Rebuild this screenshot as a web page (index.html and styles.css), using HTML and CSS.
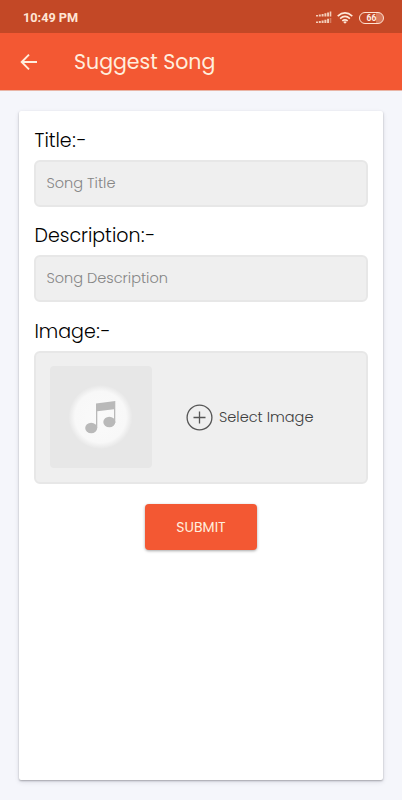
FILE: index.html
```html
<!DOCTYPE html>
<html lang="en">
<head>
<meta charset="utf-8">
<title>Suggest Song</title>
<link rel="stylesheet" href="styles.css">
</head>
<body>
<div class="status">
  <span class="time">10:49 PM</span>
  <svg class="signal" width="16" height="13" viewBox="0 0 16 13" fill="#f3cdb9">
    <path d="M0 4h2v1.500H0zM2.800 3.500h2v2h-2zM5.600 2.900h2v2.600h-2zM8.400 2.200h2v3.300h-2zM11.100 1.400h1.900v4.100h-1.900zM13.700.500h1.600v5h-1.600zM0 10.500h2V12H0zM2.800 10h2v2h-2zM5.600 9.400h2V12h-2zM8.400 8.700h2V12h-2zM11.100 7.800h1.900V12h-1.900z"/>
    <path d="M13.700 7h1.600v5h-1.600z" opacity=".4"/>
  </svg>
  <svg class="wifi" width="16" height="12" viewBox="0 0 16 12" fill="none" stroke="#ffe9d9" stroke-width="1.600">
    <path d="M.700 4.100Q8-2.400 15.300 4.100M3.100 6.600Q8 2.300 12.900 6.600M5.300 8.900Q8 6.700 10.700 8.900"/>
    <path d="M6.200 9.900Q8 8.700 9.800 9.900L8 11.800z" fill="#ffe9d9" stroke="none"/>
  </svg>
  <span class="battery">66</span>
</div>
<header class="bar">
  <svg class="back" width="18" height="18" viewBox="0 0 18 18" fill="none" stroke="#ffeedd" stroke-width="1.900">
    <path d="M17 9H2M9 1.700L1.700 9L9 16.300"/>
  </svg>
  <h1 class="heading">Suggest Song</h1>
</header>
<main class="card">
  <div class="label title-label">Title<span class="mark">:-</span></div>
  <div class="field">Song Title</div>
  <div class="label">Description<span class="mark">:-</span></div>
  <div class="field">Song Description</div>
  <div class="label image-label">Image<span class="mark">:-</span></div>
  <div class="picker">
    <div class="thumb">
      <svg width="102" height="102" viewBox="0 0 102 102">
        <defs><radialGradient id="disc"><stop offset="0" stop-color="#fafafa"/><stop offset=".8" stop-color="#f8f8f8"/><stop offset="1" stop-color="#e7e7e7"/></radialGradient></defs>
        <circle cx="50.500" cy="51" r="32" fill="url(#disc)"/>
        <g fill="#b9b9b9"><path d="M46 37.500L65.300 35V57H64V43.200L47.300 45.200V62H46z"/><ellipse cx="41.200" cy="62" rx="6" ry="5.300"/><ellipse cx="59.300" cy="56" rx="6" ry="5.300"/></g>
      </svg>
    </div>
    <div class="select">
      <svg width="27" height="27" viewBox="0 0 27 27" fill="none" stroke="#555" stroke-width="1.300"><circle cx="13.500" cy="13.500" r="12.400"/><path d="M7.500 13.500h12M13.500 7.500v12"/></svg>
      <span>Select Image</span>
    </div>
  </div>
  <button class="submit">SUBMIT</button>
</main>
</body>
</html>
```
FILE: styles.css
```css
* { box-sizing: border-box; }
body {
  margin: 0;
  height: 800px;
  display: flex;
  flex-direction: column;
  overflow: hidden;
  background: #f5f6fb;
  font-family: Poppins, Inter, sans-serif;
  font-weight: 300;
  white-space: nowrap;
}
.status {
  height: 33px;
  flex: none;
  display: flex;
  align-items: center;
  padding: 2px 18px 0 23px;
  background: #c34826;
}
.time {
  margin-right: auto;
  padding-top: 1px;
  color: #ffe5d5;
  font: 700 12.700px/16px Roboto, sans-serif;
}
.signal { margin-right: 5px; }
.wifi { margin-right: 6px; }
.battery {
  width: 25px;
  height: 12px;
  border: 1.500px solid #ffe3d3;
  border-radius: 6px;
  background: linear-gradient(90deg, transparent 70%, #d9795c 70%);
  color: #fff0e5;
  font: 700 8.500px/10px Roboto, sans-serif;
  text-align: center;
}
.bar {
  height: 57px;
  flex: none;
  display: flex;
  align-items: center;
  padding-left: 20px;
  background: #f35833;
  box-shadow: 0 1px 0 #e9b5a6;
}
.heading {
  margin: 0 0 0 36px;
  color: #ffeedd;
  font-size: 20.500px;
  font-weight: 400;
  line-height: 30px;
}
.card {
  width: 364px;
  height: 669px;
  margin: 21px 0 0 19px;
  padding: 15px 15px 0;
  border-radius: 2px;
  background: #fff;
  box-shadow: 0 1px 2px rgba(0,0,0,.28), 0 2px 5px rgba(40,45,70,.12);
}
.label {
  height: 28px;
  margin-top: 14px;
  padding-left: .5px;
  color: #000;
  font-size: 19px;
  line-height: 29px;
}
.title-label { margin-top: 0; }
.image-label { margin-top: 15px; }
.mark { margin-left: .5px; letter-spacing: 1px; }
.field {
  height: 47px;
  margin-top: 6px;
  padding-left: 10.500px;
  border: 2px solid #e7e7e7;
  border-radius: 6px;
  background: #efefef;
  color: #858585;
  font-size: 14.500px;
  line-height: 42px;
}
.picker {
  height: 133px;
  margin-top: 6px;
  padding: 0 0 1px 14px;
  display: flex;
  align-items: center;
  border: 2px solid #e7e7e7;
  border-radius: 6px;
  background: #efefef;
}
.thumb {
  width: 102px;
  height: 102px;
  border-radius: 4px;
  background: #e7e7e7;
}
.select {
  display: flex;
  align-items: center;
  gap: 6px;
  margin-left: 34px;
  color: #3c3c3c;
  font-size: 14.500px;
  line-height: 24px;
}
.submit {
  display: block;
  width: 112px;
  height: 46px;
  margin: 20px auto 0;
  padding: 0;
  border: 0;
  border-radius: 4px;
  background: #f35833;
  box-shadow: 0 1px 3px rgba(0,0,0,.35);
  color: #ffeedd;
  font: 400 14px/46px Poppins, Inter, sans-serif;
}
```
